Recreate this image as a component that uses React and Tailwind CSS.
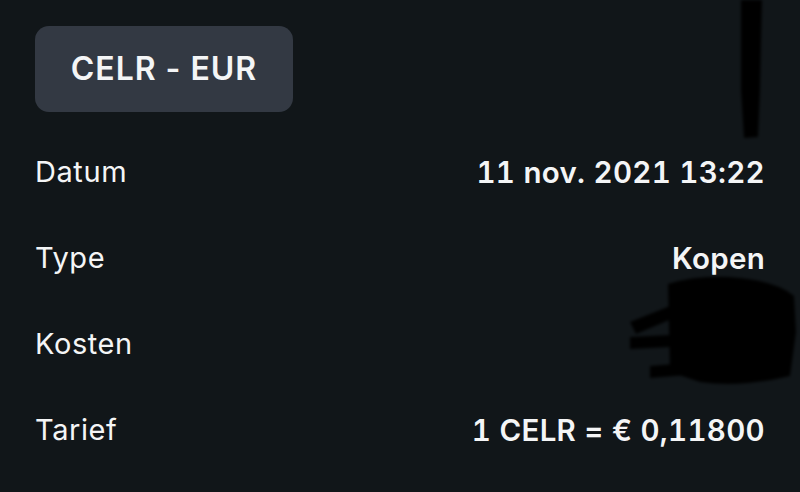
export default function App() {
  const rows = [
    { label: "Datum", value: "11 nov. 2021 13:22" },
    { label: "Type", value: "Kopen" },
    { label: "Kosten", value: "" },
    { label: "Tarief", value: "1 CELR = € 0,11800" },
  ];

  return (
    <div
      className="relative w-[800px] h-[492px] overflow-hidden bg-[#111619] text-[#f4f5f6] px-[35px] pt-[26px]"
      style={{ fontFamily: "Inter, 'Noto Sans', sans-serif" }}
    >
      <div className="inline-flex h-[86px] w-[258px] items-center justify-center rounded-[14px] bg-[#333943] text-[32px] font-semibold tracking-[0.03em]">
        CELR - EUR
      </div>

      <div className="mt-[17px] flex flex-col">
        {rows.map((r) => (
          <div key={r.label} className="flex h-[86px] items-center justify-between">
            <span className="text-[29px] tracking-[0.02em]">{r.label}</span>
            <span className="text-[29.5px] font-semibold tracking-[0.01em] tabular-nums">{r.value}</span>
          </div>
        ))}
      </div>

      {/* redaction scribbles */}
      <svg className="pointer-events-none absolute left-0 top-0" width="800" height="492">
        <defs>
          <filter id="soft">
            <feGaussianBlur stdDeviation="1.6" />
          </filter>
        </defs>
        <g fill="#040506" filter="url(#soft)">
          <path d="M741 0 L762 0 L761 40 L760 90 L758 137 L744 138 L741 90 L741 40 Z" />
          <path d="M668 284 Q700 274 740 278 Q778 282 794 296 L796 332 L790 376 Q740 388 700 382 L670 372 Z" />
          <path d="M630 322 L670 306 L674 318 L636 334 Z" />
          <path d="M630 337 L690 334 L690 346 L630 349 Z" />
          <path d="M650 366 L700 362 L700 374 L650 378 Z" />
        </g>
      </svg>
    </div>
  );
}
